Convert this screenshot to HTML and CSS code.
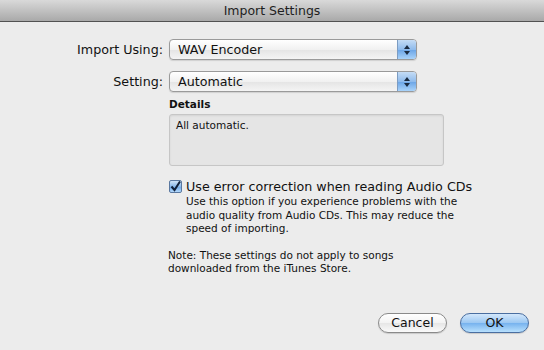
FILE: index.html
```html
<!DOCTYPE html>
<html>
<head>
<meta charset="utf-8">
<link rel="stylesheet" href="styles.css">
</head>
<body>
<div class="window">
  <div class="titlebar">Import Settings</div>
  <div class="content">
    <div class="form">
      <div class="label">Import Using:</div>
      <div class="popup"><span class="popup-text">WAV Encoder</span><span class="stepper"><svg width="8" height="12" viewBox="0 0 8 12"><path d="M4 1 L7 5 L1 5 Z M1 7 L7 7 L4 11 Z" fill="#1a2a40"/></svg></span></div>
      <div class="label">Setting:</div>
      <div class="popup"><span class="popup-text">Automatic</span><span class="stepper"><svg width="8" height="12" viewBox="0 0 8 12"><path d="M4 1 L7 5 L1 5 Z M1 7 L7 7 L4 11 Z" fill="#1a2a40"/></svg></span></div>
    </div>
    <div class="details">
      <div class="details-title">Details</div>
      <div class="details-box">All automatic.</div>
    </div>
    <div class="check-row">
      <span class="checkbox"><svg width="11" height="11" viewBox="0 0 11 11"><path d="M1.5 5.5 L4.5 9 L10 0.5" fill="none" stroke="#10203a" stroke-width="2"/></svg></span>
      <span class="check-label">Use error correction when reading Audio CDs</span>
    </div>
    <p class="help">Use this option if you experience problems with the<br>audio quality from Audio CDs. This may reduce the<br>speed of importing.</p>
    <p class="note">Note: These settings do not apply to songs<br>downloaded from the iTunes Store.</p>
    <div class="buttons">
      <button class="btn">Cancel</button>
      <button class="btn btn-default">OK</button>
    </div>
  </div>
</div>
</body>
</html>
```

FILE: styles.css
```css
html, body {
  margin: 0;
  padding: 0;
}
body {
  width: 544px;
  height: 350px;
  background: #ececec;
  font-family: "DejaVu Sans", "Liberation Sans", sans-serif;
  color: #111;
  overflow: hidden;
}
.window {
  width: 544px;
  height: 350px;
  display: flex;
  flex-direction: column;
}
.titlebar {
  height: 21px;
  line-height: 21px;
  text-align: center;
  font-size: 12.5px;
  color: #1e1e1e;
  background: linear-gradient(#d9d9d9, #a9a9a9);
  border-bottom: 1px solid #525252;
}
.content {
  flex: 1;
  position: relative;
}
.form {
  display: grid;
  grid-template-columns: 163px 248px;
  column-gap: 6px;
  row-gap: 11px;
  align-items: center;
  padding-top: 17px;
}
.label {
  text-align: right;
  font-size: 12.7px;
}
.popup {
  height: 19px;
  border: 1px solid #9a9a9a;
  border-radius: 4px;
  background: linear-gradient(#ffffff, #f1f1f1 50%, #e4e4e4 51%, #f4f4f4);
  display: flex;
  align-items: center;
  overflow: hidden;
  box-shadow: 0 1px 1px rgba(0,0,0,0.12);
}
.popup-text {
  flex: 1;
  padding-left: 8px;
  font-size: 12.7px;
}
.stepper {
  width: 18px;
  height: 19px;
  border-left: 1px solid #7c9cc2;
  background: linear-gradient(#c5dcf5, #8fbbec 50%, #6aa4e6 51%, #a9d3fa);
  display: flex;
  align-items: center;
  justify-content: center;
}
.details {
  margin-left: 169px;
  margin-top: 6px;
  width: 275px;
}
.details-title {
  font-size: 10.5px;
  font-weight: bold;
  height: 16px;
  line-height: 12px;
}
.details-box {
  height: 44px;
  border: 1px solid #c6c6c6;
  border-radius: 3px;
  background: #e5e5e5;
  padding: 3px 6px;
  font-size: 10.5px;
  line-height: 14px;
  box-shadow: inset 0 1px 2px rgba(0,0,0,0.08);
}
.check-row {
  display: flex;
  align-items: center;
  margin-left: 169px;
  margin-top: 13px;
  height: 14px;
}
.checkbox {
  width: 11px;
  height: 11px;
  border: 1px solid #5a78a0;
  border-radius: 2px;
  background: linear-gradient(#cfe3f8, #89b8ea 50%, #6aa4e6 51%, #b3d8fb);
  display: flex;
  align-items: center;
  justify-content: center;
}
.check-label {
  margin-left: 4px;
  font-size: 12.7px;
}
.help {
  margin: 2px 0 0 186px;
  font-size: 10.5px;
  line-height: 13.5px;
  white-space: nowrap;
}
.note {
  margin: 13px 0 0 168px;
  font-size: 10.5px;
  line-height: 13px;
  white-space: nowrap;
}
.buttons {
  display: flex;
  justify-content: flex-end;
  gap: 13px;
  padding-right: 15px;
  margin-top: 38px;
}
.btn {
  width: 69px;
  height: 20px;
  border: 1px solid #8a8a8a;
  border-radius: 10px;
  background: linear-gradient(#ffffff, #f3f3f3 50%, #e6e6e6 51%, #fafafa);
  font-family: "DejaVu Sans", "Liberation Sans", sans-serif;
  font-size: 12.5px;
  color: #111;
  padding: 0;
  box-shadow: 0 1px 1px rgba(0,0,0,0.15);
}
.btn-default {
  border-color: #4a6ea0;
  background: linear-gradient(#d3e7fb, #9ac7f2 50%, #76b2ee 51%, #b8e0fd);
}
```
